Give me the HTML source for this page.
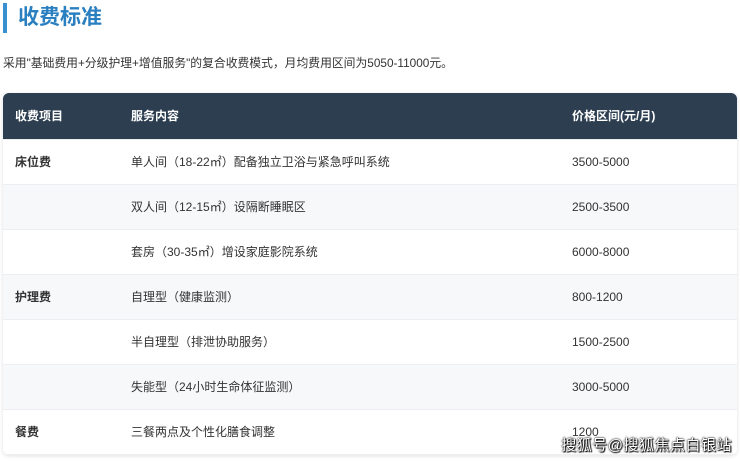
<!DOCTYPE html>
<html><head><meta charset="utf-8"><style>
*{margin:0;padding:0;box-sizing:border-box}
body{width:740px;height:461px;overflow:hidden;background:#fff;font-family:"Liberation Sans","Noto Sans CJK SC",sans-serif;color:#333;position:relative}
.bar{position:absolute;left:3px;top:3px;width:4px;height:30px;background:#3a8fd0}
h1{position:absolute;left:18px;top:4px;font-size:21px;line-height:28px;color:#2a7fc0;font-weight:bold}
p{position:absolute;left:3px;top:54px;font-size:11.8px;line-height:18px;color:#333}
.tbl{position:absolute;left:3px;top:93px;width:734px;height:362px;border-radius:6px;overflow:hidden;box-shadow:0 1px 4px rgba(0,0,0,.12)}
.row{height:45px;position:relative;font-size:12px;border-bottom:1px solid #eceef1}
.row span{position:absolute;top:0;line-height:44px}
.c1{left:12px;font-weight:bold}.c2{left:128px}.c3{left:569px}
.hd{background:#2c3e50;color:#fff;height:47px;font-weight:bold}
.hd span{line-height:47px}
.g{background:#f7f8fa}
.wm{position:absolute;right:8px;top:434px;font-size:15px;color:#fff;text-shadow:0 0 2px #000,0 0 1px #000,1px 1px 1px #000;letter-spacing:0.5px}
</style></head><body>
<div class="bar"></div>
<h1>收费标准</h1>
<p>采用"基础费用+分级护理+增值服务"的复合收费模式，月均费用区间为5050-11000元。</p>
<div class="tbl">
<div class="row hd"><span class="c1">收费项目</span><span class="c2">服务内容</span><span class="c3">价格区间(元/月)</span></div>
<div class="row"><span class="c1">床位费</span><span class="c2">单人间（18-22㎡）配备独立卫浴与紧急呼叫系统</span><span class="c3">3500-5000</span></div>
<div class="row g"><span class="c2">双人间（12-15㎡）设隔断睡眠区</span><span class="c3">2500-3500</span></div>
<div class="row"><span class="c2">套房（30-35㎡）增设家庭影院系统</span><span class="c3">6000-8000</span></div>
<div class="row g"><span class="c1">护理费</span><span class="c2">自理型（健康监测）</span><span class="c3">800-1200</span></div>
<div class="row"><span class="c2">半自理型（排泄协助服务）</span><span class="c3">1500-2500</span></div>
<div class="row g"><span class="c2">失能型（24小时生命体征监测）</span><span class="c3">3000-5000</span></div>
<div class="row"><span class="c1">餐费</span><span class="c2">三餐两点及个性化膳食调整</span><span class="c3">1200</span></div>
</div>
<div class="wm">搜狐号@搜狐焦点白银站</div>
</body></html>
